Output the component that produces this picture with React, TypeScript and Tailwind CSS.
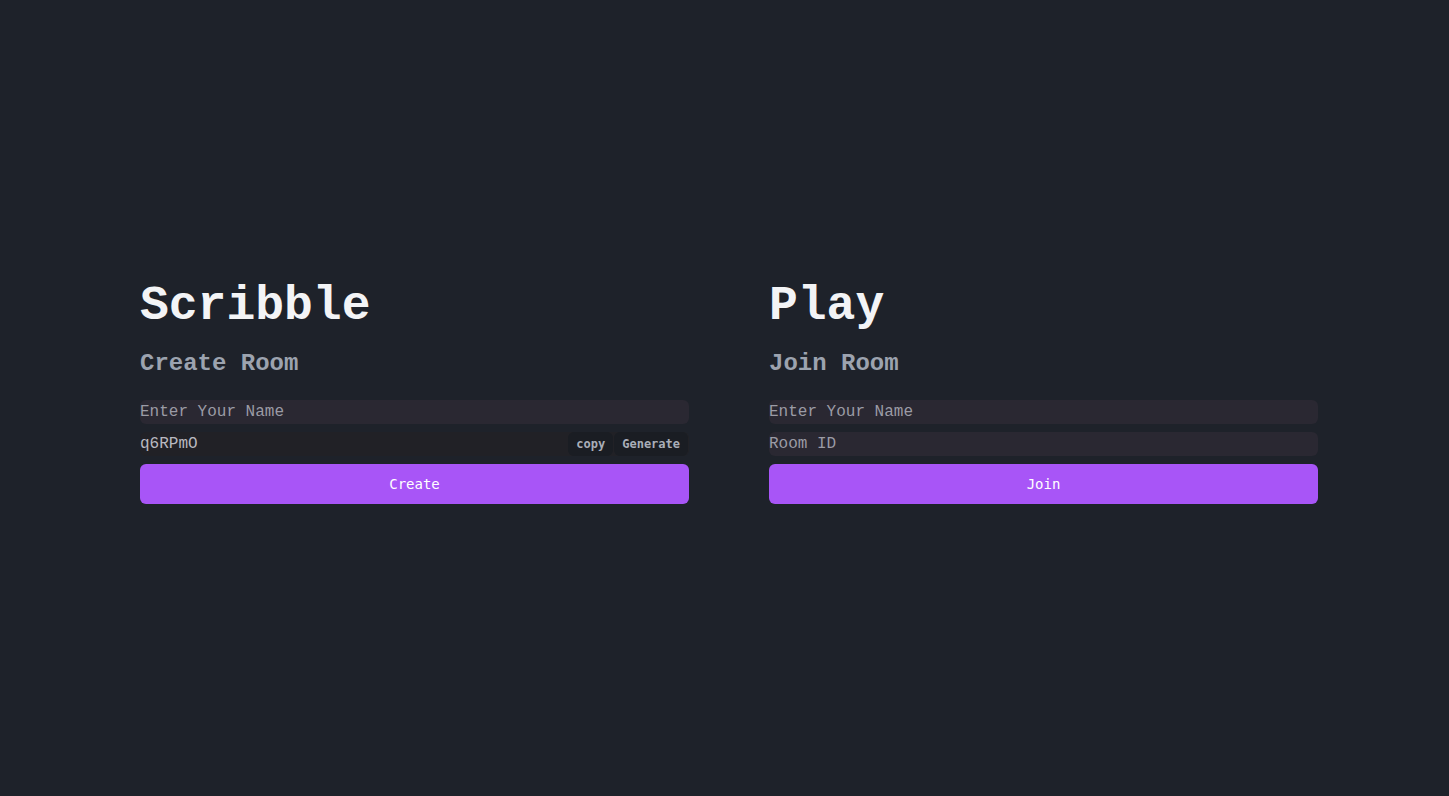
import React from 'react';

const mono = { fontFamily: '"Liberation Mono", monospace' };
const btnFont = { fontFamily: '"DejaVu Sans Mono", monospace' };

const App: React.FC = () => {
  return (
    <div className="min-h-screen w-full bg-[#1e222a] flex items-center" style={mono}>
      <div className="flex gap-[80px] pl-[140px] -mt-[11px]">
        {/* Create */}
        <div className="w-[549px] flex flex-col">
          <h1 className="text-5xl leading-[48px] font-bold text-[#f3f4f6]">Scribble</h1>
          <h2 className="text-2xl leading-8 font-bold text-[#9ca3af] mt-[18px]">Create Room</h2>
          <div className="mt-5 flex flex-col gap-2">
            <input
              placeholder="Enter Your Name"
              className="h-6 w-full rounded-md bg-[#2a2832] text-base text-[#d1d5db] placeholder:text-[#9b9ba5] outline-none"
            />
            <div className="flex h-6 items-center gap-px rounded-md bg-[#212126] pr-px">
              <input
                defaultValue="q6RPmO"
                className="h-6 flex-1 bg-transparent text-base text-[#b9b9c0] outline-none"
              />
              <button className="h-6 rounded-md bg-[#1a1d23] px-2 text-xs font-bold text-[#a9aeb8]" style={btnFont}>copy</button>
              <button className="h-6 rounded-md bg-[#1a1d23] px-2 text-xs font-bold text-[#a9aeb8]" style={btnFont}>Generate</button>
            </div>
            <button className="h-10 w-full rounded-md bg-[#a855f7] text-sm text-white" style={btnFont}>Create</button>
          </div>
        </div>

        {/* Join */}
        <div className="w-[549px] flex flex-col">
          <h1 className="text-5xl leading-[48px] font-bold text-[#f3f4f6]">Play</h1>
          <h2 className="text-2xl leading-8 font-bold text-[#9ca3af] mt-[18px]">Join Room</h2>
          <div className="mt-5 flex flex-col gap-2">
            <input
              placeholder="Enter Your Name"
              className="h-6 w-full rounded-md bg-[#2a2832] text-base text-[#d1d5db] placeholder:text-[#9b9ba5] outline-none"
            />
            <input
              placeholder="Room ID"
              className="h-6 w-full rounded-md bg-[#2a2832] text-base text-[#d1d5db] placeholder:text-[#9b9ba5] outline-none"
            />
            <button className="h-10 w-full rounded-md bg-[#a855f7] text-sm text-white" style={btnFont}>Join</button>
          </div>
        </div>
      </div>
    </div>
  );
};

export default App;
